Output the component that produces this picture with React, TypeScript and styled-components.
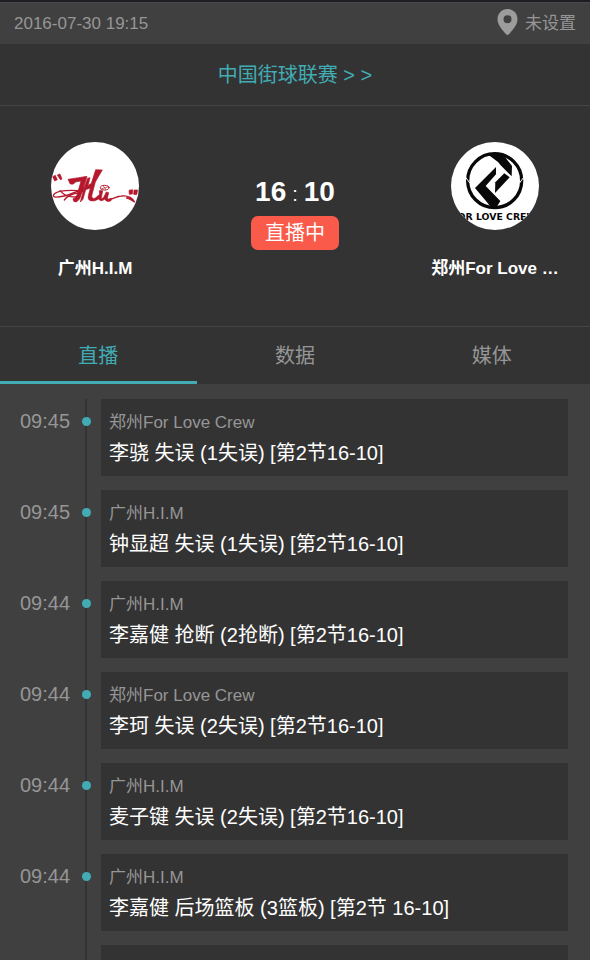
import React from "react";
import styled, { createGlobalStyle } from "styled-components";

const color = {
  panel: "#333333",
  surface: "#404040",
  line: "#444444",
  muted: "#969696",
  accent: "#42acb5",
  live: "#f95a4a",
};

const GlobalStyle = createGlobalStyle`
  * { box-sizing: border-box; }
  body {
    margin: 0;
    background: ${color.surface};
    color: #fff;
    font-family: "Liberation Sans", "Noto Sans CJK SC", sans-serif;
    font-weight: 400;
  }
`;

const Page = styled.div`
  display: flex;
  flex-direction: column;
  height: 100vh;
  overflow: hidden;
  border-top: 2px solid #1e1e22;
`;

const InfoBar = styled.header`
  flex: none;
  display: flex;
  justify-content: space-between;
  align-items: center;
  height: 42px;
  padding: 0 14px;
  border-top: 1px solid #4a4a4a;
  background: ${color.surface};
  color: ${color.muted};
  font-size: 17px;
`;

const Place = styled.span`
  display: flex;
  align-items: center;
  gap: 7px;
  padding-bottom: 4px;
`;

const LeagueBar = styled.div`
  flex: none;
  display: flex;
  justify-content: center;
  align-items: center;
  height: 62px;
  border-bottom: 1px solid ${color.line};
  background: ${color.panel};
`;

const LeagueLink = styled.a`
  color: ${color.accent};
  font-size: 20px;
  line-height: 28px;
  text-decoration: none;
`;

const Match = styled.section`
  flex: none;
  display: flex;
  justify-content: space-between;
  height: 221px;
  padding-top: 36px;
  border-bottom: 1px solid ${color.line};
  background: ${color.panel};
`;

const Team = styled.div`
  display: flex;
  flex-direction: column;
  align-items: center;
  gap: 27px;
  width: 190px;
`;

const TeamName = styled.h2`
  margin: 0;
  font-size: 17px;
  font-weight: 700;
  line-height: 24px;
  white-space: nowrap;
`;

const ScoreBox = styled.div`
  display: flex;
  flex-direction: column;
  align-items: center;
  gap: 6px;
  padding-top: 34px;
`;

const Score = styled.div`
  display: flex;
  align-items: baseline;
  gap: 6px;
  font-size: 20px;
  line-height: 32px;
`;

const Points = styled.strong`
  font-size: 28px;
  font-weight: 700;
`;

const LiveBadge = styled.span`
  padding: 0 14px;
  border-radius: 7px;
  background: ${color.live};
  font-size: 20px;
  line-height: 34px;
`;

const Tabs = styled.nav`
  flex: none;
  display: grid;
  grid-template-columns: repeat(3, 1fr);
  background: ${color.panel};
`;

const Tab = styled.button<{ $active?: boolean }>`
  height: 57px;
  padding: 0;
  border: 0;
  border-bottom: 3px solid ${(p) => (p.$active ? color.accent : "transparent")};
  background: none;
  color: ${(p) => (p.$active ? color.accent : color.muted)};
  font: inherit;
  font-size: 20px;
`;

const Feed = styled.ol`
  flex: 1;
  min-height: 0;
  overflow: hidden;
  margin: 0;
  padding: 15px 22px 0 20px;
  list-style: none;
`;

const Event = styled.li`
  display: grid;
  grid-template-columns: 61px 10px 1fr;
`;

const Time = styled.time`
  padding-top: 10px;
  color: ${color.muted};
  font-size: 20px;
  line-height: 24px;
`;

const Rail = styled.div`
  display: flex;
  justify-content: center;
  background: linear-gradient(${color.panel}, ${color.panel}) center / 2px 100% no-repeat;
`;

const Dot = styled.span`
  width: 9px;
  height: 9px;
  margin-top: 18px;
  border-radius: 50%;
  background: ${color.accent};
`;

const Card = styled.article`
  height: 77px;
  margin: 0 0 14px 10px;
  padding: 12px 8px;
  background: ${color.panel};
`;

const CardTeam = styled.div`
  color: ${color.muted};
  font-size: 17px;
  line-height: 24px;
`;

const CardText = styled.p`
  margin: 4px 0 0;
  font-size: 20px;
  line-height: 28px;
`;

const Logo = styled.svg`
  display: block;
  width: 88px;
  height: 88px;
  border-radius: 50%;
  background: #fff;
`;

const PinIcon = () => (
  <svg width="21" height="26" viewBox="0 0 20 26" aria-hidden="true">
    <path
      fill="#9c9c9c"
      fillRule="evenodd"
      d="M10 0C4.300 0 0 4.500 0 10.200C0 16 5 21 8.600 25.200Q10 26.600 11.400 25.200C15 21 20 16 20 10.200C20 4.500 15.700 0 10 0ZM10 6.200A4 4 0 1 1 10 14.200A4 4 0 1 1 10 6.200Z"
    />
  </svg>
);

const HimLogo = () => (
  <Logo viewBox="33 36 264 264" role="img" aria-label="广州H.I.M">
    <g fill="#b5182c" stroke="#b5182c" strokeWidth="2" strokeLinejoin="round">
      <path d="M38 140L46 136L52 149L44 153Z M52 135L60 132L66 147L61 149Z" />
      <path d="M267 181L278 179L277 192L268 193Z M282 180L293 180L290 194L281 193Z" />
      <path d="M84 148L116 143L141 139L139 147L124 192Q120 211 108 216Q99 216 99 206Q106 206 111 195L123 153L107 156Q99 167 90 161Z" />
      <path d="M167 119L187 120Q174 142 166 156L156 194Q153 207 165 205L179 193L178 182L188 182L184 203Q184 207 190 204L199 186L206 188L202 205Q204 210 215 205L213 212Q201 219 194 208Q182 217 176 207Q163 216 151 212Q142 209 145 197L151 174L137 179L129 208L121 216L129 185L119 188L121 180L132 173L143 145L150 143L144 167L154 160Z" />
    </g>
    <g fill="none" stroke="#b5182c" strokeWidth="4" strokeLinecap="round">
      <path d="M129 184C99 179 50 180 41 194C36 204 54 202 73 198C91 194 108 184 123 181" />
      <path d="M60 182C72 196 87 205 113 199" />
      <path d="M73 210C84 196 98 190 117 189" />
      <path d="M207 208C224 207 227 199 244 198C262 196 276 202 284 216C276 211 269 205 260 204" />
      <ellipse cx="194" cy="173" rx="13" ry="7" strokeWidth="3" />
      <path d="M183 177L205 170M190 168L197 178" strokeWidth="2" />
    </g>
    <path d="M257 202Q277 199 285 218Q275 211 257 202Z" fill="#b5182c" />
  </Logo>
);

const CrewLogo = () => (
  <Logo viewBox="33 36 264 264" role="img" aria-label="郑州For Love Crew">
    <circle cx="164" cy="152" r="81" fill="none" stroke="#080808" strokeWidth="10" />
    <path d="M77 142L90 160M251 142L238 160" stroke="#fff" strokeWidth="3" />
    <g fill="#080808">
      <path d="M143 73Q174 68 195 81L216 108L215 139L182 106L174 96Z" />
      <path d="M168 111L168 133L137 168L181 213L168 234Q151 234 143 219L105 174Z" />
      <path d="M193 130L209 142L165 189L166 157Z" />
    </g>
    <text
      x="162"
      y="270"
      textAnchor="middle"
      fill="#080808"
      fontFamily="DejaVu Sans"
      fontWeight="700"
      fontSize="28"
    >
      FOR LOVE CREW
    </text>
  </Logo>
);

const events = [
  { time: "09:45", team: "郑州For Love Crew", text: "李骁 失误 (1失误) [第2节16-10]" },
  { time: "09:45", team: "广州H.I.M", text: "钟显超 失误 (1失误) [第2节16-10]" },
  { time: "09:44", team: "广州H.I.M", text: "李嘉健 抢断 (2抢断) [第2节16-10]" },
  { time: "09:44", team: "郑州For Love Crew", text: "李珂 失误 (2失误) [第2节16-10]" },
  { time: "09:44", team: "广州H.I.M", text: "麦子键 失误 (2失误) [第2节16-10]" },
  { time: "09:44", team: "广州H.I.M", text: "李嘉健 后场篮板 (3篮板) [第2节 16-10]" },
];

export default function App() {
  return (
    <Page lang="zh-CN">
      <GlobalStyle />
      <InfoBar>
        <time dateTime="2016-07-30T19:15">2016-07-30 19:15</time>
        <Place>
          <PinIcon />
          未设置
        </Place>
      </InfoBar>
      <LeagueBar>
        <LeagueLink href="#league">中国街球联赛 &gt; &gt;</LeagueLink>
      </LeagueBar>
      <Match>
        <Team>
          <HimLogo />
          <TeamName>广州H.I.M</TeamName>
        </Team>
        <ScoreBox>
          <Score>
            <Points>16</Points>:<Points>10</Points>
          </Score>
          <LiveBadge>直播中</LiveBadge>
        </ScoreBox>
        <Team>
          <CrewLogo />
          <TeamName>郑州For Love …</TeamName>
        </Team>
      </Match>
      <Tabs>
        <Tab type="button" $active>直播</Tab>
        <Tab type="button">数据</Tab>
        <Tab type="button">媒体</Tab>
      </Tabs>
      <Feed>
        {events.map((event, index) => (
          <Event key={index}>
            <Time>{event.time}</Time>
            <Rail>
              <Dot />
            </Rail>
            <Card>
              <CardTeam>{event.team}</CardTeam>
              <CardText>{event.text}</CardText>
            </Card>
          </Event>
        ))}
        <Event aria-hidden="true">
          <span />
          <Rail />
          <Card />
        </Event>
      </Feed>
    </Page>
  );
}
